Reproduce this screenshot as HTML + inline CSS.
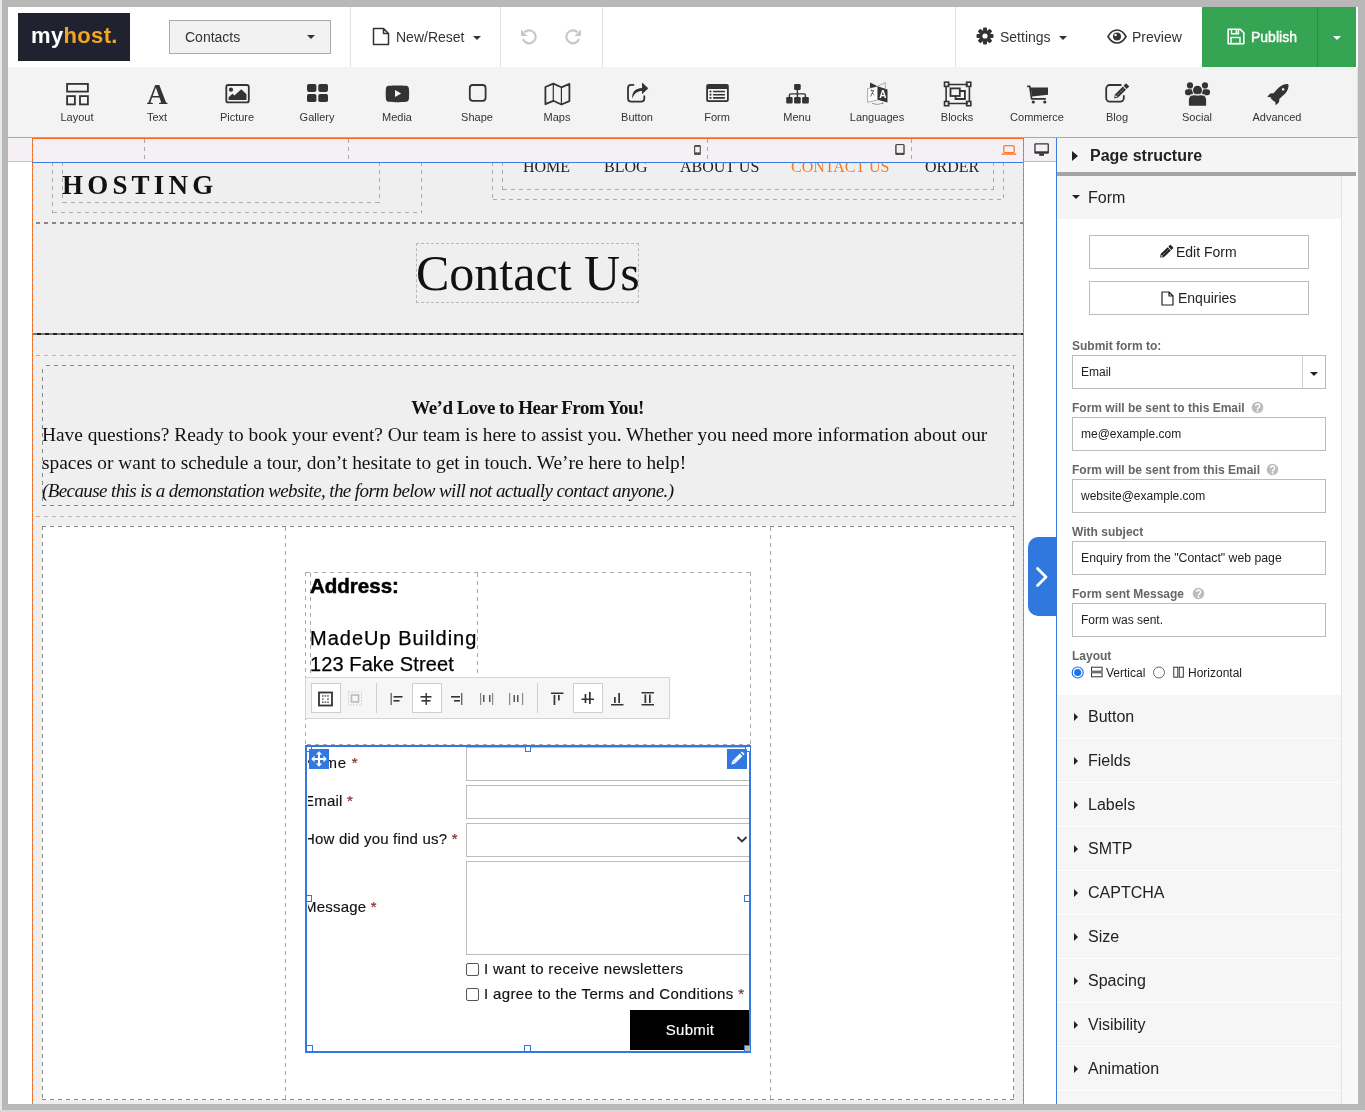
<!DOCTYPE html>
<html><head><meta charset="utf-8">
<style>
*{box-sizing:border-box;margin:0;padding:0}
html,body{width:1365px;height:1112px;overflow:hidden;background:#b8b8b8;font-family:"Liberation Sans",sans-serif;color:#333}
.a{position:absolute}
.sans{font-family:"Liberation Sans",sans-serif}
.serif{font-family:"Liberation Serif",serif}
.nw{white-space:nowrap}
.vsep{position:absolute;width:1px;background:#e2e2e2}
.tool{position:absolute;top:67px;width:80px;height:70px;text-align:center}
.tool .lbl{position:absolute;left:0;right:0;top:111px;font-size:11px;color:#333}
.tl{position:absolute;top:111px;width:80px;text-align:center;font-size:11px;color:#333;line-height:13px}
.dh{position:absolute;height:1px;background:repeating-linear-gradient(90deg,#aaa 0 4px,transparent 4px 8px)}
.dv{position:absolute;width:1px;background:repeating-linear-gradient(180deg,#aaa 0 4px,transparent 4px 8px)}
.dh2{position:absolute;height:1px;background:repeating-linear-gradient(90deg,#888 0 4px,transparent 4px 8px)}
.dv2{position:absolute;width:1px;background:repeating-linear-gradient(180deg,#888 0 4px,transparent 4px 8px)}
</style></head>
<body><div style="position:absolute;left:0;top:0;width:1365px;height:1112px;will-change:transform">
<!-- frame light edges -->
<div class="a" style="left:0;top:0;width:2px;height:1112px;background:#e8e8e8"></div>
<div class="a" style="left:0;top:1110px;width:1365px;height:2px;background:#d8d8d8"></div>

<!-- TOP BAR -->
<div class="a" style="left:8px;top:7px;width:1350px;height:60px;background:#fff"></div>
<div class="a" style="left:18px;top:13px;width:112px;height:48px;background:#20232f"></div>
<div class="a nw" style="left:31px;top:21px;font-size:22px;font-weight:700;color:#fff;letter-spacing:0.35px;line-height:30px">my<span style="color:#f5a524">host.</span></div>

<div class="a" style="left:169px;top:20px;width:162px;height:34px;background:#f2f2f2;border:1px solid #aaa"></div>
<div class="a nw" style="left:185px;top:29px;font-size:14px;line-height:17px;color:#333">Contacts</div>
<div class="a" style="left:307px;top:35px;width:0;height:0;border-left:4px solid transparent;border-right:4px solid transparent;border-top:4px solid #333"></div>

<div class="vsep" style="left:350px;top:7px;height:60px"></div>
<div class="vsep" style="left:500px;top:7px;height:60px"></div>
<div class="vsep" style="left:602px;top:7px;height:60px"></div>
<div class="vsep" style="left:955px;top:7px;height:60px"></div>

<!-- new/reset -->
<svg class="a" style="left:372px;top:27px" width="18" height="19" viewBox="0 0 18 19"><path d="M1.5 1.5h10l5 5v11h-15z M11.5 1.5v5h5" fill="none" stroke="#333" stroke-width="1.5" stroke-linejoin="round"/></svg>
<div class="a nw" style="left:396px;top:29px;font-size:14px;line-height:17px;color:#333">New/Reset</div>
<div class="a" style="left:473px;top:36px;width:0;height:0;border-left:4px solid transparent;border-right:4px solid transparent;border-top:4px solid #333"></div>
<!-- undo redo -->
<svg class="a" style="left:520px;top:28px" width="18" height="17" viewBox="0 0 18 17"><path d="M4.5 4.2A6.5 6.5 0 1 1 3 11" fill="none" stroke="#c8c8c8" stroke-width="2.2"/><path d="M1 1.5v6.5h6.5z" fill="#c8c8c8"/></svg>
<svg class="a" style="left:564px;top:28px" width="18" height="17" viewBox="0 0 18 17"><path d="M13.5 4.2A6.5 6.5 0 1 0 15 11" fill="none" stroke="#c8c8c8" stroke-width="2.2"/><path d="M17 1.5v6.5h-6.5z" fill="#c8c8c8"/></svg>

<!-- settings -->
<svg class="a" style="left:976px;top:27px" width="18" height="18" viewBox="0 0 18 18"><g fill="#333"><circle cx="9" cy="9" r="6"/><rect x="7" y="0.5" width="4" height="17" rx="1"/><rect x="7" y="0.5" width="4" height="17" rx="1" transform="rotate(45 9 9)"/><rect x="7" y="0.5" width="4" height="17" rx="1" transform="rotate(90 9 9)"/><rect x="7" y="0.5" width="4" height="17" rx="1" transform="rotate(135 9 9)"/></g><circle cx="9" cy="9" r="2.6" fill="#fff"/></svg>
<div class="a nw" style="left:1000px;top:29px;font-size:14px;line-height:17px;color:#333">Settings</div>
<div class="a" style="left:1059px;top:36px;width:0;height:0;border-left:4px solid transparent;border-right:4px solid transparent;border-top:4px solid #333"></div>
<!-- preview -->
<svg class="a" style="left:1107px;top:29px" width="20" height="15" viewBox="0 0 20 15"><path d="M1 7.5C4 2 7 1 10 1s6 1 9 6.5C16 13 13 14 10 14S4 13 1 7.5z" fill="none" stroke="#333" stroke-width="1.6"/><circle cx="10" cy="7.5" r="4" fill="#333"/><circle cx="8.6" cy="6" r="1.2" fill="#fff"/></svg>
<div class="a nw" style="left:1132px;top:29px;font-size:14px;line-height:17px;color:#333">Preview</div>

<!-- publish -->
<div class="a" style="left:1202px;top:7px;width:154px;height:60px;background:#35a553"></div>
<div class="a" style="left:1317px;top:7px;width:1px;height:60px;background:#2b8a43"></div>
<svg class="a" style="left:1227px;top:28px" width="18" height="17" viewBox="0 0 18 17"><path d="M1.2 1.2h12l3.6 3.6v11h-15.6z" fill="none" stroke="#fff" stroke-width="1.6" stroke-linejoin="round"/><path d="M4.5 1.2v4.5h7v-4.5" fill="none" stroke="#fff" stroke-width="1.4"/><rect x="8.6" y="2" width="1.6" height="3" fill="#fff"/><rect x="4" y="9.5" width="9" height="6" fill="none" stroke="#fff" stroke-width="1.4"/></svg>
<div class="a nw" style="left:1251px;top:29px;font-size:14px;line-height:17px;color:#fff;letter-spacing:0px;-webkit-text-stroke:0.4px #fff">Publish</div>
<div class="a" style="left:1333px;top:36px;width:0;height:0;border-left:4px solid transparent;border-right:4px solid transparent;border-top:4px solid #fff"></div>

<!-- TOOLBAR -->
<div class="a" style="left:8px;top:67px;width:1350px;height:71px;background:#f3f3f3;border-bottom:1px solid #a8a8a8;border-right:1px solid #e0e0e0"></div>
<!-- TOOL ICONS -->
<svg class="a" style="left:37px;top:67px" width="1280" height="70" viewBox="37 67 1280 70">
<g fill="none" stroke="#333" stroke-width="1.8">
 <rect x="67.1" y="83.9" width="20.8" height="7.7"/>
 <rect x="67.1" y="96.1" width="7.8" height="8.3"/>
 <rect x="80" y="96.1" width="7.9" height="8.3"/>
</g>
<!-- picture -->
<rect x="226.3" y="85" width="22.5" height="17.4" rx="2" fill="none" stroke="#333" stroke-width="1.8"/>
<circle cx="231" cy="89.7" r="2.1" fill="#333"/>
<path d="M228.6 99.9v-2.6l3.9-3.6 1.9 1.9 6.9-6.3 5.2 5v5.6z" fill="#333"/>
<!-- gallery -->
<g fill="#333"><rect x="307" y="84" width="9.4" height="7.9" rx="1.8"/><rect x="318.3" y="84" width="9.7" height="7.9" rx="1.8"/><rect x="307" y="94" width="9.4" height="8" rx="1.8"/><rect x="318.3" y="94" width="9.7" height="8" rx="1.8"/></g>
<!-- media -->
<path d="M388.5 85.8c3-.3 6.5-.4 8.8-.4s6 .1 9 .4c1.6.2 2.5 1.3 2.6 3 .1 1.6.2 3.2.2 5s-.1 3.4-.2 5c-.1 1.7-1 2.8-2.6 3-3 .3-6.7.4-9 .4s-5.8-.1-8.8-.4c-1.6-.2-2.5-1.3-2.6-3-.1-1.6-.2-3.2-.2-5s.1-3.4.2-5c.1-1.7 1-2.8 2.6-3z" fill="#333"/>
<path d="M395 90v7.1l6.2-3.55z" fill="#f3f3f3"/>
<!-- shape -->
<rect x="469.8" y="85" width="15.8" height="15.8" rx="3" fill="none" stroke="#333" stroke-width="1.8"/>
<!-- maps -->
<path d="M545.4 87l7.9-3.4 8.1 3.7 8-3.4v17.2l-8 3.4-8.1-3.7-7.9 3.4z" fill="none" stroke="#333" stroke-width="1.8" stroke-linejoin="round"/><path d="M553.3 83.6v17.2 M561.4 87.3v17.2" fill="none" stroke="#333" stroke-width="1.2"/>
<!-- button share -->
<path d="M634.2 84.9h-3a3.2 3.2 0 0 0-3.2 3.2v10.3a3.2 3.2 0 0 0 3.2 3.2h9.9a3.2 3.2 0 0 0 3.2-3.2v-3" fill="none" stroke="#333" stroke-width="1.8"/>
<path d="M632.3 98.6C631.6 92.2 635.2 88.2 642 87.9V82.4L648.3 88.3L642 94.3V90.9C637.6 90.9 634.2 93.1 632.3 98.6Z" fill="#333"/>
<!-- form -->
<rect x="706.2" y="84.1" width="22.6" height="17.8" rx="2" fill="#333"/>
<rect x="708" y="89" width="19" height="11.2" fill="#f3f3f3"/>
<g fill="#333"><rect x="709.6" y="90.6" width="1.8" height="1.8"/><rect x="709.6" y="93.8" width="1.8" height="1.8"/><rect x="709.6" y="97" width="1.8" height="1.8"/><rect x="712.9" y="90.7" width="12.2" height="1.6" rx=".8"/><rect x="712.9" y="93.9" width="12.2" height="1.6" rx=".8"/><rect x="712.9" y="97.1" width="12.2" height="1.6" rx=".8"/></g>
<!-- menu sitemap -->
<g fill="#333"><rect x="794.1" y="84.1" width="6.6" height="5.9" rx="1.2"/><rect x="786.2" y="97.1" width="6.4" height="6.3" rx="1.2"/><rect x="794.1" y="97.1" width="6.6" height="6.3" rx="1.2"/><rect x="802.1" y="97.1" width="6.7" height="6.3" rx="1.2"/></g>
<path d="M797.4 89v8.5 M789.4 97.5v-2.3q0-1.3 1.3-1.3h13.4q1.3 0 1.3 1.3v2.3" fill="none" stroke="#333" stroke-width="1.4"/>
<!-- languages -->
<path d="M867.6 88.6L877.7 86.3V100L867.6 102.3Z" fill="#fff" stroke="#888" stroke-width=".7"/>
<path d="M877.7 86.3L887.5 89.6V102.4L877.7 99.8Z" fill="#333"/>
<path d="M870 82.4L877.7 86.3L870 88.1Z" fill="#333"/>
<path d="M877.7 86.3L885.3 82.6V89.2" fill="none" stroke="#888" stroke-width=".7"/>
<path d="M872 103.4Q877 105.6 882.6 103.3" fill="none" stroke="#777" stroke-width=".7"/>
<circle cx="882.8" cy="103.2" r=".6" fill="#555"/>
<text x="879.2" y="97.8" font-family="Liberation Sans" font-weight="700" font-size="10" fill="#fff">A</text>
<path d="M870.6 90.7h3.4M873.6 90.7l-3.2 5.8M871.8 92.7l2.6 2.3M871.5 89.6v1" fill="none" stroke="#333" stroke-width=".75"/>
<!-- blocks -->
<g fill="none" stroke="#333" stroke-width="1.6">
<path d="M947.7 84.5h20.3 M947.7 103.5h20.3 M946.1 86.2v15.7 M969.4 86.2v15.7"/>
<rect x="944.5" y="82.2" width="4.2" height="4.2"/><rect x="966.6" y="82.2" width="4.2" height="4.2"/><rect x="944.5" y="101.5" width="4.2" height="4.2"/><rect x="966.6" y="101.5" width="4.2" height="4.2"/>
<rect x="950.5" y="88.4" width="9.3" height="7.6" stroke-width="1.8"/>
<path d="M960 91h4.9v8h-9.3v-2.9" stroke-width="1.8"/>
</g>
<!-- commerce cart -->
<path d="M1027.2 86.3h2.6l1.8 12.5h14.3" fill="none" stroke="#333" stroke-width="1.7" stroke-linejoin="round"/>
<path d="M1030.6 87.4h17.4v7.4l-15.9 1.8z" fill="#333"/>
<circle cx="1033.3" cy="102" r="1.6" fill="#333"/><circle cx="1044.8" cy="102" r="1.6" fill="#333"/>
<!-- blog -->
<path d="M1121.4 85h-11.6a3.6 3.6 0 0 0-3.6 3.6v9.4a3.6 3.6 0 0 0 3.6 3.6h10.4a3.6 3.6 0 0 0 3.6-3.6v-2.8" fill="none" stroke="#333" stroke-width="1.8"/>
<path d="M1107 88.5v9.4a3.6 3.6 0 0 0 3.6 3.6" fill="none" stroke="#333" stroke-width="1.8" transform="translate(0 0)" opacity="0"/>
<g transform="translate(1114.1 98.4) rotate(-45)">
<path d="M0 0L3.4 -2.2H14.6V2.2H3.4Z" fill="#333"/>
<rect x="15.6" y="-2.2" width="3.6" height="4.4" fill="#333"/>
<path d="M1.6 0L3.6 -1.1V1.1Z" fill="#f3f3f3"/>
<path d="M4.5 0H14" stroke="#f3f3f3" stroke-width=".6" stroke-dasharray="1.2 1"/>
</g>
<!-- social -->
<g fill="#333"><circle cx="1190" cy="85.4" r="3.1"/><circle cx="1205" cy="85.4" r="3.1"/>
<rect x="1185" y="89.2" width="8" height="6" rx="2.6"/>
<rect x="1202" y="89.2" width="8" height="6" rx="2.6"/>
<path d="M1188.9 105.2v-5.2q0-4.8 4.8-4.8h7.6q4.8 0 4.8 4.8v5.2q0 .6-.6.6h-16z"/></g>
<circle cx="1197.5" cy="90.3" r="5.3" fill="#f3f3f3"/>
<path d="M1188.9 95.1q0-1 1-1M1206.1 95.1" stroke="none"/>
<circle cx="1197.5" cy="90.3" r="4.5" fill="#333"/>
<path d="M1190 94.9q7.5-1.2 15 0" fill="none" stroke="#f3f3f3" stroke-width=".9"/>
<!-- advanced rocket -->
<g transform="translate(1278.3 94.2) rotate(45)">
<path d="M0 -14.2C3.9 -11.6 4.6 -7 4.3 -2L4.1 2.6L6.2 5.2L6 9.6L2.6 7.2V8.2H-2.6V7.2L-6 9.6L-6.2 5.2L-4.1 2.6L-4.3 -2C-4.6 -7 -3.9 -11.6 0 -14.2Z" fill="#333"/>
<circle cx="0" cy="-6.8" r="1.3" fill="#f3f3f3"/>
</g>
<!-- A -->
<text x="157.3" y="104" text-anchor="middle" font-family="Liberation Serif" font-weight="700" font-size="29" fill="#333">A</text>
</svg>
<div class="tl" style="left:37px">Layout</div>
<div class="tl" style="left:117px">Text</div>
<div class="tl" style="left:197px">Picture</div>
<div class="tl" style="left:277px">Gallery</div>
<div class="tl" style="left:357px">Media</div>
<div class="tl" style="left:437px">Shape</div>
<div class="tl" style="left:517px">Maps</div>
<div class="tl" style="left:597px">Button</div>
<div class="tl" style="left:677px">Form</div>
<div class="tl" style="left:757px">Menu</div>
<div class="tl" style="left:837px">Languages</div>
<div class="tl" style="left:917px">Blocks</div>
<div class="tl" style="left:997px">Commerce</div>
<div class="tl" style="left:1077px">Blog</div>
<div class="tl" style="left:1157px">Social</div>
<div class="tl" style="left:1237px">Advanced</div>


<!-- CANVAS -->
<!-- CANVAS BG -->
<div class="a" style="left:8px;top:138px;width:1049px;height:966px;background:#fff"></div>
<div class="a" style="left:33px;top:162px;width:990px;height:942px;background:#efefef"></div>

<!-- header content -->
<div class="dv" style="left:52px;top:162px;height:51px"></div>
<div class="dh" style="left:53px;top:212px;width:369px"></div>
<div class="dv" style="left:421px;top:162px;height:51px"></div>
<div class="dv" style="left:62px;top:162px;height:41px"></div>
<div class="dh" style="left:63px;top:202px;width:317px"></div>
<div class="dv" style="left:379px;top:162px;height:41px"></div>
<div class="a serif nw" style="left:62px;top:170px;font-size:27px;line-height:30px;font-weight:700;color:#111;letter-spacing:4.2px">HOSTING</div>

<div class="dv" style="left:492px;top:162px;height:38px"></div>
<div class="dh" style="left:493px;top:199px;width:511px"></div>
<div class="dv" style="left:1003px;top:162px;height:38px"></div>
<div class="dv" style="left:502px;top:162px;height:28px"></div>
<div class="dh" style="left:503px;top:189px;width:491px"></div>
<div class="dv" style="left:993px;top:162px;height:28px"></div>
<div class="a serif nw" style="left:523px;top:157px;font-size:16px;line-height:20px;color:#222">HOME</div>
<div class="a serif nw" style="left:604px;top:157px;font-size:16px;line-height:20px;color:#222">BLOG</div>
<div class="a serif nw" style="left:680px;top:157px;font-size:16px;line-height:20px;color:#222">ABOUT US</div>
<div class="a serif nw" style="left:791px;top:157px;font-size:16px;line-height:20px;color:#f47a22">CONTACT US</div>
<div class="a serif nw" style="left:925px;top:157px;font-size:16px;line-height:20px;color:#222">ORDER</div>

<!-- thick dashed under header -->
<div class="a" style="left:36px;top:222px;width:987px;height:2px;background:repeating-linear-gradient(90deg,#888 0 4px,transparent 4px 8px)"></div>

<!-- Contact Us -->
<div class="a" style="left:416px;top:243px;width:223px;height:60px;border:1px dashed #b8b8b8"></div>
<div class="a serif nw" style="left:416px;top:245px;font-size:50px;line-height:56px;color:#111">Contact Us</div>

<!-- dark dashed rule -->
<div class="a" style="left:33px;top:333px;width:990px;height:2px;background:repeating-linear-gradient(90deg,#777 0 4px,#222 4px 8px)"></div>

<div class="dh" style="left:36px;top:355px;width:984px;opacity:.8"></div>

<!-- text box -->
<div class="dh2" style="left:46px;top:365px;width:968px"></div>
<div class="dv2" style="left:42px;top:369px;width:1px;height:136px"></div>
<div class="dv2" style="left:1013px;top:365px;height:140px"></div>
<div class="dh2" style="left:42px;top:505px;width:972px"></div>
<div class="a serif nw" style="left:42px;top:394px;width:971px;text-align:center;font-size:19px;line-height:28px;font-weight:700;color:#111;letter-spacing:-0.5px">We’d Love to Hear From You!</div>
<div class="a serif nw" style="left:42px;top:421px;font-size:19.36px;line-height:28px;color:#111">Have questions? Ready to book your event? Our team is here to assist you. Whether you need more information about our</div>
<div class="a serif nw" style="left:42px;top:449px;font-size:19.36px;line-height:28px;color:#111">spaces or want to schedule a tour, don’t hesitate to get in touch. We’re here to help!</div>
<div class="a serif nw" style="left:42px;top:477px;font-size:19px;line-height:28px;color:#111;font-style:italic;letter-spacing:-0.6px">(Because this is a demonstation website, the form below will not actually contact anyone.)</div>

<div class="dh" style="left:36px;top:516px;width:984px;opacity:.8"></div>

<!-- white content area -->
<div class="a" style="left:42px;top:526px;width:972px;height:574px;background:#fff"></div>
<div class="dh2" style="left:42px;top:526px;width:972px"></div>
<div class="dh2" style="left:42px;top:1099px;width:972px"></div>
<div class="dv2" style="left:42px;top:526px;height:574px"></div>
<div class="dv2" style="left:1013px;top:526px;height:574px"></div>
<div class="dv" style="left:285px;top:527px;height:572px"></div>
<div class="dv" style="left:770px;top:527px;height:572px"></div>

<!-- address box -->
<div class="dh" style="left:306px;top:572px;width:445px"></div>
<div class="dv" style="left:305px;top:572px;height:478px"></div>
<div class="dv" style="left:750px;top:572px;height:175px"></div>
<div class="dv" style="left:310px;top:573px;height:104px"></div>
<div class="dv" style="left:477px;top:573px;height:104px"></div>
<div class="a sans nw" style="left:310px;top:574px;font-size:20.5px;line-height:24px;font-weight:700;color:#000;-webkit-text-stroke:0.5px #000">Address:</div>
<div class="a sans nw" style="left:310px;top:626px;font-size:20px;line-height:25px;color:#000;letter-spacing:1px;-webkit-text-stroke:0.25px #000">MadeUp Building</div>
<div class="a sans nw" style="left:310px;top:652px;font-size:20px;line-height:25px;color:#000;letter-spacing:0.1px;-webkit-text-stroke:0.25px #000">123 Fake Street</div>

<!-- alignment toolbar -->
<div class="a" style="left:305px;top:677px;width:365px;height:42px;background:#f6f6f6;border:1px solid #d4d4d4"></div>
<div class="a" style="left:311px;top:683px;width:30px;height:30px;background:#fff;border:1px solid #cfcfcf"></div>
<div class="a" style="left:412px;top:683px;width:30px;height:30px;background:#fff;border:1px solid #cfcfcf"></div>
<div class="a" style="left:573px;top:683px;width:30px;height:30px;background:#fff;border:1px solid #cfcfcf"></div>
<div class="a" style="left:376px;top:683px;width:1px;height:30px;background:#cfcfcf"></div>
<div class="a" style="left:537px;top:683px;width:1px;height:30px;background:#cfcfcf"></div>
<svg class="a" style="left:305px;top:677px" width="365" height="42" viewBox="305 677 365 42">
 <rect x="319" y="692.5" width="13" height="13" fill="none" stroke="#333" stroke-width="1.8"/>
 <g fill="#444"><rect x="322" y="695.3" width="1.6" height="1.3"/><rect x="324.6" y="695.3" width="1.6" height="1.3"/><rect x="327.2" y="695.3" width="1.6" height="1.3"/><rect x="322" y="698.4" width="1.6" height="1.3"/><rect x="327.2" y="698.4" width="1.6" height="1.3"/><rect x="322" y="701.5" width="1.6" height="1.3"/><rect x="324.6" y="701.5" width="1.6" height="1.3"/><rect x="327.2" y="701.5" width="1.6" height="1.3"/></g>
 <rect x="348.5" y="692" width="13" height="13" fill="none" stroke="#c8c8c8" stroke-width="1" stroke-dasharray="1.5 1.5"/>
 <rect x="351.5" y="695" width="7" height="7" fill="none" stroke="#bbb" stroke-width="1.6"/>
 <!-- align left -->
 <rect x="390.5" y="693" width="1.4" height="12" fill="#666"/><rect x="393.5" y="696" width="9" height="1.6" fill="#333"/><rect x="393.5" y="700" width="6" height="1.6" fill="#333"/>
 <!-- align center -->
 <rect x="425.5" y="693" width="1.4" height="12" fill="#333"/><rect x="420.5" y="696" width="11" height="1.6" fill="#333"/><rect x="421.5" y="700" width="9" height="1.6" fill="#333"/>
 <!-- align right -->
 <rect x="461" y="693" width="1.4" height="12" fill="#666"/><rect x="451" y="696" width="9" height="1.6" fill="#333"/><rect x="454" y="700" width="6" height="1.6" fill="#333"/>
 <!-- space between -->
 <rect x="480" y="693" width="1.2" height="12" fill="#888"/><rect x="492" y="693" width="1.2" height="12" fill="#888"/><rect x="483" y="695" width="1.5" height="7" fill="#555"/><rect x="489" y="695" width="1.5" height="7" fill="#555"/>
 <!-- space around -->
 <rect x="509" y="693" width="1.2" height="12" fill="#888"/><rect x="522" y="693" width="1.2" height="12" fill="#888"/><rect x="513.5" y="695" width="1.5" height="7" fill="#555"/><rect x="517" y="695" width="1.5" height="7" fill="#555"/>
 <!-- valign top -->
 <rect x="551" y="692.5" width="12.5" height="1.5" fill="#333"/><rect x="553.6" y="695" width="1.7" height="10" fill="#333"/><rect x="558" y="695" width="1.7" height="5.5" fill="#333"/>
 <!-- valign middle -->
 <rect x="581.5" y="698.5" width="12.5" height="1.5" fill="#333"/><rect x="584.6" y="694" width="1.7" height="9" fill="#333"/><rect x="589" y="692" width="1.7" height="12" fill="#333"/>
 <!-- valign bottom -->
 <rect x="611" y="704" width="12.5" height="1.5" fill="#333"/><rect x="614" y="697" width="1.7" height="6" fill="#333"/><rect x="618.3" y="693" width="1.7" height="10" fill="#333"/>
 <!-- stretch -->
 <rect x="641.5" y="692" width="12.5" height="1.5" fill="#333"/><rect x="641.5" y="704" width="12.5" height="1.5" fill="#333"/><rect x="644.5" y="694.5" width="1.7" height="8.5" fill="#333"/><rect x="649" y="694.5" width="1.7" height="8.5" fill="#333"/>
</svg>

<!-- FORM -->
<div class="a sans nw" style="clip-path:inset(0 0 0 4px);left:304px;top:754px;font-size:15px;line-height:18px;color:#111;letter-spacing:0.7px;-webkit-text-stroke:0.15px #111">Name <span style="color:#b33">*</span></div>
<div class="a sans nw" style="clip-path:inset(0 0 0 4px);left:304px;top:792px;font-size:15px;line-height:18px;color:#111;letter-spacing:0.2px;-webkit-text-stroke:0.15px #111">Email <span style="color:#b33">*</span></div>
<div class="a sans nw" style="clip-path:inset(0 0 0 4px);left:304px;top:830px;font-size:15px;line-height:18px;color:#111;letter-spacing:0.2px;-webkit-text-stroke:0.15px #111">How did you find us? <span style="color:#b33">*</span></div>
<div class="a sans nw" style="clip-path:inset(0 0 0 4px);left:304px;top:898px;font-size:15px;line-height:18px;color:#111;letter-spacing:0.2px;-webkit-text-stroke:0.15px #111">Message <span style="color:#b33">*</span></div>
<div class="a" style="left:466px;top:747px;width:284px;height:34px;border:1px solid #bdbdbd;background:#fff"></div>
<div class="a" style="left:466px;top:785px;width:284px;height:34px;border:1px solid #bdbdbd;background:#fff"></div>
<div class="a" style="left:466px;top:823px;width:284px;height:34px;border:1px solid #bdbdbd;background:#fff"></div>
<svg class="a" style="left:736px;top:835px" width="12" height="9" viewBox="0 0 12 9"><path d="M1.5 2l4.5 4.5 4.5-4.5" fill="none" stroke="#333" stroke-width="1.8"/></svg>
<div class="a" style="left:466px;top:861px;width:284px;height:94px;border:1px solid #bdbdbd;background:#fff"></div>
<div class="a" style="left:466px;top:963px;width:13px;height:13px;border:1px solid #555;border-radius:2px;background:#fff"></div>
<div class="a" style="left:466px;top:988px;width:13px;height:13px;border:1px solid #555;border-radius:2px;background:#fff"></div>
<div class="a sans nw" style="left:484px;top:960px;font-size:15px;line-height:18px;color:#111;letter-spacing:0.35px;-webkit-text-stroke:0.15px #111">I want to receive newsletters</div>
<div class="a sans nw" style="left:484px;top:985px;font-size:15px;line-height:18px;color:#111;letter-spacing:0.35px;-webkit-text-stroke:0.15px #111">I agree to the Terms and Conditions <span style="color:#b33">*</span></div>
<div class="a" style="left:630px;top:1010px;width:120px;height:40px;background:#000"></div>
<div class="a sans nw" style="left:630px;top:1021px;width:120px;text-align:center;font-size:15px;line-height:18px;color:#fff;letter-spacing:0.3px;-webkit-text-stroke:0.15px #fff">Submit</div>

<!-- form selection -->
<div class="dh" style="left:307px;top:744px;width:443px"></div><div class="a" style="left:305px;top:745px;width:446px;height:308px;border:2px solid #3278e0"></div>
<div class="a" style="left:306px;top:746px;width:6px;height:6px;background:#fff;border:1px solid #3278e0"></div>
<div class="a" style="left:745px;top:746px;width:6px;height:6px;background:#fff;border:1px solid #3278e0"></div>
<div class="a" style="left:525px;top:746px;width:6px;height:6px;background:#fff;border:1px solid #3278e0"></div>
<div class="a" style="left:306px;top:895px;width:6px;height:7px;background:#fff;border:1px solid #3278e0"></div>
<div class="a" style="left:744px;top:895px;width:6px;height:7px;background:#fff;border:1px solid #3278e0"></div>
<div class="a" style="left:306px;top:1045px;width:7px;height:7px;background:#fff;border:1px solid #3278e0"></div>
<div class="a" style="left:524px;top:1045px;width:7px;height:7px;background:#fff;border:1px solid #3278e0"></div>
<div class="a" style="left:744px;top:1045px;width:7px;height:7px;background:#bbb;border:1px solid #3278e0"></div>
<div class="a" style="left:309px;top:749px;width:20px;height:20px;background:#3278e0"></div>
<svg class="a" style="left:309px;top:749px" width="20" height="20" viewBox="0 0 20 20"><path d="M10 4v12M4 10h12" stroke="#fff" stroke-width="2"/><path d="M10 2.2l-3.2 3.3h6.4zM10 17.8l-3.2-3.3h6.4zM2.2 10l3.3-3.2v6.4zM17.8 10l-3.3-3.2v6.4z" fill="#fff"/></svg>
<div class="a" style="left:727px;top:749px;width:20px;height:20px;background:#3278e0"></div>
<svg class="a" style="left:727px;top:749px" width="20" height="20" viewBox="0 0 20 20"><path d="M12.8 4.6l2.6 2.6-7.4 7.4-3.6 1 1-3.6z M13.8 3.6l1.2-1.2 2.6 2.6-1.2 1.2z" fill="#fff"/><path d="M6.5 12l1.5 1.5" stroke="#3278e0" stroke-width=".8"/></svg>

<!-- canvas borders -->
<div class="a" style="left:32px;top:138px;width:1px;height:966px;background:repeating-linear-gradient(180deg,#ff6a1a 0 4px,#aaa 4px 5px)"></div>
<div class="a" style="left:1023px;top:138px;width:1px;height:966px;background:repeating-linear-gradient(180deg,#ff6a1a 0 4px,#aaa 4px 5px)"></div>

<!-- TOP STRIP overlay -->
<div class="a" style="left:8px;top:138px;width:24px;height:24px;background:#f4f0f3;border-bottom:1px solid #c4c4c4"></div>
<div class="a" style="left:33px;top:138px;width:990px;height:24px;background:#f5f0f3"></div>
<div class="a" style="left:32px;top:138px;width:992px;height:1px;background:#ff6a1a"></div>
<div class="a" style="left:33px;top:161px;width:990px;height:1px;background:#f9f1e4"></div><div class="a" style="left:32px;top:162px;width:991px;height:1px;background:#3b7ddd"></div>
<div class="dv" style="left:144px;top:139px;height:23px"></div>
<div class="dv" style="left:348px;top:139px;height:23px"></div>
<div class="dv" style="left:707px;top:139px;height:23px"></div>
<div class="dv" style="left:911px;top:139px;height:23px"></div>
<div class="a" style="left:1024px;top:138px;width:32px;height:24px;background:#f5f0f3;border-bottom:1px solid #bdbdbd"></div>
<svg class="a" style="left:690px;top:142px" width="370" height="17" viewBox="690 142 370 17">
 <rect x="694.1" y="145" width="6.7" height="10" rx="1.3" fill="#444"/><rect x="695.2" y="146.8" width="4.5" height="5.6" fill="#f5f0f3"/><rect x="697.2" y="153.2" width=".6" height="1.8" fill="#999"/>
 <rect x="895.2" y="144" width="9.5" height="10.9" rx="1.5" fill="#444"/><rect x="896.6" y="145.1" width="6.7" height="7.7" fill="#f5f0f3"/><rect x="899.7" y="153.2" width=".6" height="1.7" fill="#999"/>
 <rect x="1003.8" y="145.6" width="10.4" height="7" rx="1.2" fill="none" stroke="#ff7a33" stroke-width="1.3"/>
 <rect x="1001.4" y="153.3" width="15" height="1.5" rx=".7" fill="#ff7a33"/>
 <rect x="1034.3" y="143.2" width="14.6" height="10.5" rx="1.2" fill="#333"/>
 <rect x="1035.6" y="144.5" width="12" height="6.8" fill="#f5f0f3"/>
 <rect x="1039.2" y="153.5" width="4.8" height="2.3" fill="#333"/>
</svg>


<!-- RIGHT PANEL -->
<!-- RIGHT PANEL -->
<div class="a" style="left:1057px;top:138px;width:299px;height:966px;background:#fff"></div>
<div class="a" style="left:1341px;top:176px;width:15px;height:928px;background:#f8f8f8;border-left:1px solid #e4e4e4"></div>
<div class="a" style="left:1356px;top:138px;width:2px;height:966px;background:#fafafa"></div>
<div class="a" style="left:1056px;top:138px;width:1px;height:966px;background:#3b7ddd"></div>
<div class="a" style="left:1057px;top:138px;width:299px;height:34px;background:#f5f5f5"></div>
<div class="a" style="left:1057px;top:172px;width:299px;height:4px;background:#a4a4a4"></div>
<div class="a" style="left:1072px;top:150.5px;width:0;height:0;border-top:5px solid transparent;border-bottom:5px solid transparent;border-left:6px solid #222"></div>
<div class="a sans nw" style="left:1090px;top:147px;font-size:16px;line-height:18px;font-weight:700;color:#222">Page structure</div>

<div class="a" style="left:1057px;top:176px;width:284px;height:43px;background:#f5f5f5"></div>
<div class="a" style="left:1072px;top:195px;width:0;height:0;border-left:4px solid transparent;border-right:4px solid transparent;border-top:4.5px solid #222"></div>
<div class="a sans nw" style="left:1088px;top:188.5px;font-size:16px;line-height:18px;color:#222">Form</div>

<div class="a" style="left:1089px;top:235px;width:220px;height:34px;border:1px solid #bcbcbc;background:#fff"></div>
<svg class="a" style="left:1158px;top:244px" width="16" height="16" viewBox="1158 244 16 16"><g transform="translate(1160.2 257.6) rotate(-44)">
<path d="M0 0L2.8 -2.3H12.6V2.3H2.8Z" fill="#222"/><rect x="13.4" y="-2.3" width="3" height="4.6" rx=".6" fill="#222"/>
<path d="M1.3 0L3 -1V1Z" fill="#fff"/><path d="M3.8 0H12" stroke="#fff" stroke-width=".6" stroke-dasharray="1 .9"/></g></svg>
<div class="a sans nw" style="left:1176px;top:244px;font-size:14px;line-height:17px;color:#222">Edit Form</div>
<div class="a" style="left:1089px;top:281px;width:220px;height:34px;border:1px solid #bcbcbc;background:#fff"></div>
<svg class="a" style="left:1161px;top:291px" width="13" height="15" viewBox="0 0 13 15"><path d="M1 1h7l4 4v9H1z M8 1v4h4" fill="none" stroke="#222" stroke-width="1.2" stroke-linejoin="round"/></svg>
<div class="a sans nw" style="left:1178px;top:290px;font-size:14px;line-height:17px;color:#222">Enquiries</div>

<div class="a sans nw" style="left:1072px;top:339px;font-size:12px;line-height:14px;font-weight:700;color:#666">Submit form to:</div>
<div class="a" style="left:1072px;top:355px;width:254px;height:34px;border:1px solid #bcbcbc;background:#fff"></div>
<div class="a" style="left:1302px;top:356px;width:1px;height:32px;background:#d0d0d0"></div>
<div class="a" style="left:1310px;top:372px;width:0;height:0;border-left:4px solid transparent;border-right:4px solid transparent;border-top:4px solid #222"></div>
<div class="a sans nw" style="left:1081px;top:365px;font-size:12px;line-height:14px;color:#222">Email</div>

<div class="a sans nw" style="left:1072px;top:401px;font-size:12px;line-height:14px;font-weight:700;color:#666">Form will be sent to this Email</div>
<svg class="a" style="left:1251px;top:401px" width="13" height="13" viewBox="0 0 13 13"><circle cx="6.5" cy="6.5" r="5.8" fill="#bdbdbd"/><path d="M4.6 5a2 2 0 1 1 2.8 1.8c-.6.3-.9.7-.9 1.3v.3" fill="none" stroke="#fff" stroke-width="1.4"/><circle cx="6.5" cy="10" r=".9" fill="#fff"/></svg>
<div class="a" style="left:1072px;top:417px;width:254px;height:34px;border:1px solid #bcbcbc;background:#fff"></div>
<div class="a sans nw" style="left:1081px;top:427px;font-size:12px;line-height:14px;color:#222">me@example.com</div>

<div class="a sans nw" style="left:1072px;top:463px;font-size:12px;line-height:14px;font-weight:700;color:#666">Form will be sent from this Email</div>
<svg class="a" style="left:1266px;top:463px" width="13" height="13" viewBox="0 0 13 13"><circle cx="6.5" cy="6.5" r="5.8" fill="#bdbdbd"/><path d="M4.6 5a2 2 0 1 1 2.8 1.8c-.6.3-.9.7-.9 1.3v.3" fill="none" stroke="#fff" stroke-width="1.4"/><circle cx="6.5" cy="10" r=".9" fill="#fff"/></svg>
<div class="a" style="left:1072px;top:479px;width:254px;height:34px;border:1px solid #bcbcbc;background:#fff"></div>
<div class="a sans nw" style="left:1081px;top:489px;font-size:12px;line-height:14px;color:#222">website@example.com</div>

<div class="a sans nw" style="left:1072px;top:525px;font-size:12px;line-height:14px;font-weight:700;color:#666">With subject</div>
<div class="a" style="left:1072px;top:541px;width:254px;height:34px;border:1px solid #bcbcbc;background:#fff"></div>
<div class="a sans nw" style="left:1081px;top:551px;font-size:12.25px;line-height:14px;color:#222">Enquiry from the "Contact" web page</div>

<div class="a sans nw" style="left:1072px;top:587px;font-size:12px;line-height:14px;font-weight:700;color:#666">Form sent Message</div>
<svg class="a" style="left:1192px;top:587px" width="13" height="13" viewBox="0 0 13 13"><circle cx="6.5" cy="6.5" r="5.8" fill="#bdbdbd"/><path d="M4.6 5a2 2 0 1 1 2.8 1.8c-.6.3-.9.7-.9 1.3v.3" fill="none" stroke="#fff" stroke-width="1.4"/><circle cx="6.5" cy="10" r=".9" fill="#fff"/></svg>
<div class="a" style="left:1072px;top:603px;width:254px;height:34px;border:1px solid #bcbcbc;background:#fff"></div>
<div class="a sans nw" style="left:1081px;top:613px;font-size:12px;line-height:14px;color:#222">Form was sent.</div>

<div class="a sans nw" style="left:1072px;top:649px;font-size:12px;line-height:14px;font-weight:700;color:#666">Layout</div>
<svg class="a" style="left:1070px;top:664px" width="180" height="17" viewBox="1070 664 180 17">
 <circle cx="1077.7" cy="672.5" r="5.5" fill="#fff" stroke="#1a73e8" stroke-width="1.2"/>
 <circle cx="1077.7" cy="672.5" r="3.6" fill="#1a73e8"/>
 <rect x="1091.5" y="667.2" width="10.6" height="4" fill="none" stroke="#333" stroke-width="1"/>
 <rect x="1091.5" y="672.8" width="10.6" height="4" fill="none" stroke="#333" stroke-width="1"/>
 <circle cx="1159" cy="672.5" r="5.5" fill="#fff" stroke="#666" stroke-width="1"/>
 <rect x="1173.8" y="667.2" width="4" height="10" fill="none" stroke="#333" stroke-width="1"/>
 <rect x="1179.3" y="667.2" width="4" height="10" fill="none" stroke="#333" stroke-width="1"/>
</svg>
<div class="a sans nw" style="left:1106px;top:666px;font-size:12px;line-height:14px;color:#222">Vertical</div>
<div class="a sans nw" style="left:1188px;top:666px;font-size:12px;line-height:14px;color:#222">Horizontal</div>

<!-- accordion -->
<div class="a" style="left:1057px;top:695px;width:284px;height:43px;background:#f6f6f6"></div>
<div class="a" style="left:1074px;top:713px;width:0;height:0;border-top:4px solid transparent;border-bottom:4px solid transparent;border-left:4.5px solid #222"></div>
<div class="a sans nw" style="left:1088px;top:708px;font-size:16px;line-height:18px;color:#222">Button</div>
<div class="a" style="left:1057px;top:739px;width:284px;height:43px;background:#f6f6f6"></div>
<div class="a" style="left:1074px;top:757px;width:0;height:0;border-top:4px solid transparent;border-bottom:4px solid transparent;border-left:4.5px solid #222"></div>
<div class="a sans nw" style="left:1088px;top:752px;font-size:16px;line-height:18px;color:#222">Fields</div>
<div class="a" style="left:1057px;top:783px;width:284px;height:43px;background:#f6f6f6"></div>
<div class="a" style="left:1074px;top:801px;width:0;height:0;border-top:4px solid transparent;border-bottom:4px solid transparent;border-left:4.5px solid #222"></div>
<div class="a sans nw" style="left:1088px;top:796px;font-size:16px;line-height:18px;color:#222">Labels</div>
<div class="a" style="left:1057px;top:827px;width:284px;height:43px;background:#f6f6f6"></div>
<div class="a" style="left:1074px;top:845px;width:0;height:0;border-top:4px solid transparent;border-bottom:4px solid transparent;border-left:4.5px solid #222"></div>
<div class="a sans nw" style="left:1088px;top:840px;font-size:16px;line-height:18px;color:#222">SMTP</div>
<div class="a" style="left:1057px;top:871px;width:284px;height:43px;background:#f6f6f6"></div>
<div class="a" style="left:1074px;top:889px;width:0;height:0;border-top:4px solid transparent;border-bottom:4px solid transparent;border-left:4.5px solid #222"></div>
<div class="a sans nw" style="left:1088px;top:884px;font-size:16px;line-height:18px;color:#222">CAPTCHA</div>
<div class="a" style="left:1057px;top:915px;width:284px;height:43px;background:#f6f6f6"></div>
<div class="a" style="left:1074px;top:933px;width:0;height:0;border-top:4px solid transparent;border-bottom:4px solid transparent;border-left:4.5px solid #222"></div>
<div class="a sans nw" style="left:1088px;top:928px;font-size:16px;line-height:18px;color:#222">Size</div>
<div class="a" style="left:1057px;top:959px;width:284px;height:43px;background:#f6f6f6"></div>
<div class="a" style="left:1074px;top:977px;width:0;height:0;border-top:4px solid transparent;border-bottom:4px solid transparent;border-left:4.5px solid #222"></div>
<div class="a sans nw" style="left:1088px;top:972px;font-size:16px;line-height:18px;color:#222">Spacing</div>
<div class="a" style="left:1057px;top:1003px;width:284px;height:43px;background:#f6f6f6"></div>
<div class="a" style="left:1074px;top:1021px;width:0;height:0;border-top:4px solid transparent;border-bottom:4px solid transparent;border-left:4.5px solid #222"></div>
<div class="a sans nw" style="left:1088px;top:1016px;font-size:16px;line-height:18px;color:#222">Visibility</div>
<div class="a" style="left:1057px;top:1047px;width:284px;height:43px;background:#f6f6f6"></div>
<div class="a" style="left:1074px;top:1065px;width:0;height:0;border-top:4px solid transparent;border-bottom:4px solid transparent;border-left:4.5px solid #222"></div>
<div class="a sans nw" style="left:1088px;top:1060px;font-size:16px;line-height:18px;color:#222">Animation</div>
<div class="a" style="left:1057px;top:1091px;width:284px;height:13px;background:#f6f6f6"></div>


<!-- collapse tab -->
<div class="a" style="left:1028px;top:537px;width:29px;height:79px;background:#3178de;border-radius:10px 0 0 10px"></div>
<svg class="a" style="left:1034px;top:566px" width="16" height="22" viewBox="0 0 16 22"><path d="M3.5 2.5l8.5 8.5-8.5 8.5" fill="none" stroke="#fff" stroke-width="2.8" stroke-linecap="round" stroke-linejoin="round"/></svg>


</div></body></html>
